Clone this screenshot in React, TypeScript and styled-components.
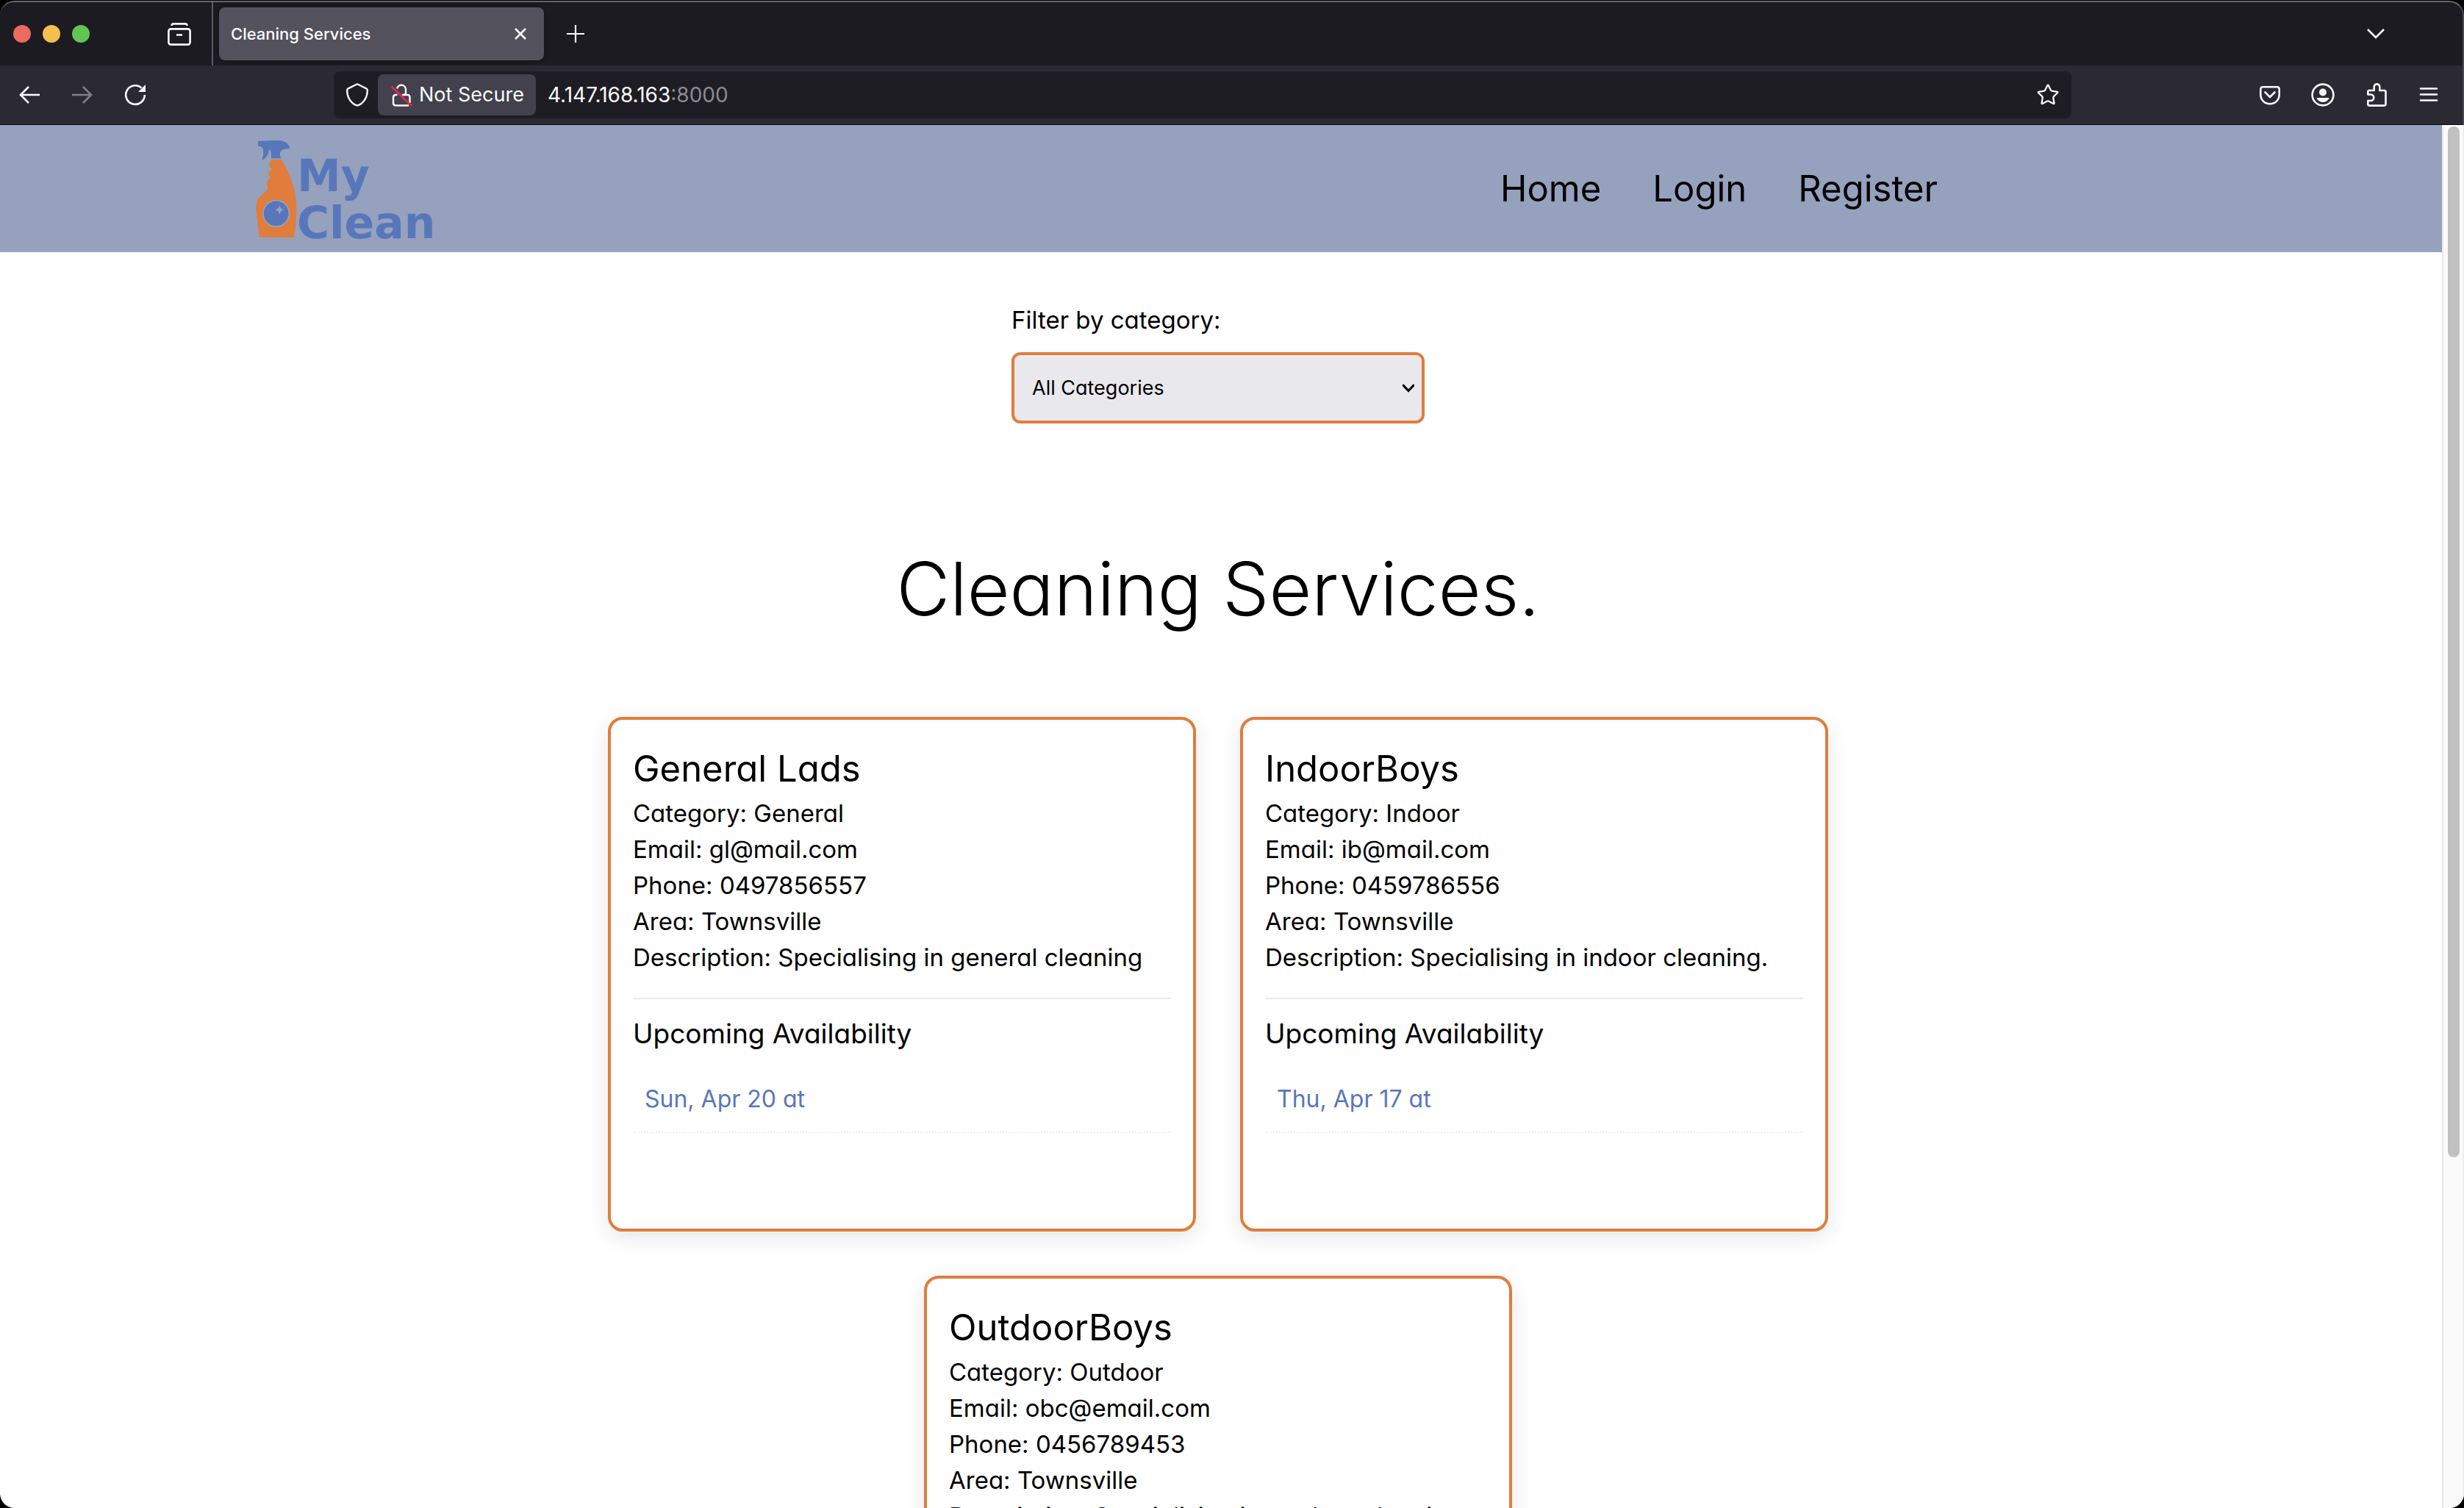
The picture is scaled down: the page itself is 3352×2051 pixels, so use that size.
import React from 'react';
import styled, { createGlobalStyle } from 'styled-components';
import { Star } from 'lucide-react';

const orange = '#e07d3c';
const blue = '#5877bb';
const haze = '#96a1bd';

const GlobalStyle = createGlobalStyle`
  *, *::before, *::after { box-sizing: border-box; }
  body { margin: 0; background: #000; }
  h1, h2, h3, p, ul { margin: 0; padding: 0; font-weight: inherit; }
  ul { list-style: none; }
  button { margin: 0; padding: 0; border: 0; background: none; color: inherit; font: inherit; }
  a { color: inherit; text-decoration: none; }
`;

const Window = styled.div`
  display: flex;
  flex-direction: column;
  height: 100vh;
  padding-top: 1px;
  overflow: hidden;
  background: #000;
  font-family: Inter, 'Liberation Sans', sans-serif;
`;

/* Browser chrome */
const TabStrip = styled.div`
  display: flex;
  align-items: center;
  flex: none;
  height: 88px;
  border-top: 2px solid #66656b;
  border-right: 2px solid #4a4951;
  border-radius: 20px 20px 0 0;
  background: #1c1b21;
  color: #fbfbfe;
`;

const Lights = styled.div`
  display: flex;
  gap: 16px;
  padding: 0 106px 0 18px;
`;

const Light = styled.button<{ $color: string }>`
  width: 24px;
  height: 24px;
  border-radius: 50%;
  background: ${(p) => p.$color};
`;

const IconButton = styled.button<{ $dim?: boolean }>`
  display: flex;
  flex: none;
  align-items: center;
  justify-content: center;
  width: 32px;
  height: 32px;
  color: ${(p) => (p.$dim ? '#807f85' : '#fbfbfe')};
`;

const Divider = styled.div`
  width: 2px;
  height: 100%;
  margin: 0 8px 0 28px;
  background: #5b5a62;
`;

const Tab = styled.div`
  display: flex;
  align-items: center;
  justify-content: space-between;
  width: 442px;
  height: 72px;
  margin-right: 27px;
  padding: 0 16px;
  border-radius: 8px;
  background: #54525c;
  box-shadow: 0 0 8px rgba(0, 0, 0, 0.4);
  font-size: 22px;
  font-weight: 500;
  line-height: 32px;
`;

const ListTabs = styled.div`
  margin-left: auto;
  padding-right: 102px;
`;

const Toolbar = styled.div`
  display: flex;
  align-items: center;
  flex: none;
  height: 81px;
  padding: 0 30px 0 24px;
  border-right: 2px solid #4a4951;
  border-bottom: 1px solid #0c0c0d;
  background: #2b2a33;
`;

const ToolGroup = styled.div`
  display: flex;
  gap: 40px;
`;

const AddressBar = styled.div`
  display: flex;
  align-items: center;
  flex: 1;
  height: 64px;
  margin: 0 254px;
  padding: 0 16px;
  border-radius: 8px;
  background: #1e1d23;
  color: #fbfbfe;
  font-size: 28px;
  line-height: 40px;
`;

const Security = styled.button`
  display: flex;
  align-items: center;
  gap: 8px;
  height: 56px;
  margin: 0 16px 0 12px;
  padding: 0 16px;
  border-radius: 8px;
  background: #42414d;
  font-size: 27px;
`;

const Url = styled.div`
  flex: 1;
`;

const Port = styled.span`
  color: #8c8b91;
`;

/* Web page */
const Viewport = styled.div`
  display: flex;
  flex: 1;
  min-height: 0;
  overflow: hidden;
  border-radius: 0 0 20px 20px;
  background: #fff;
`;

const Page = styled.div`
  flex: 1;
  min-width: 0;
  overflow: hidden;
  color: #000;
  font-weight: 400;
  font-feature-settings: 'cv11';
  font-optical-sizing: none;
`;

const ScrollTrack = styled.div`
  width: 30px;
  padding: 2px 6px;
  border-left: 2px solid #e8e8e8;
  border-right: 2px solid #efefef;
  background: #fafafa;
`;

const ScrollThumb = styled.div`
  width: 16px;
  height: 1402px;
  max-height: 75%;
  border-radius: 8px;
  background: #c1c1c1;
`;

const Header = styled.header`
  display: flex;
  align-items: center;
  justify-content: space-between;
  height: 173px;
  padding: 0 686px 0 348px;
  background: ${haze};
`;

const Logo = styled.a`
  display: flex;
  align-items: center;
`;

const LogoText = styled.span`
  display: flex;
  flex-direction: column;
  padding-top: 28px;
  color: ${blue};
  font-family: 'DejaVu Sans', sans-serif;
  font-size: 60px;
  font-weight: 700;
  line-height: 64px;
`;

const Nav = styled.nav`
  display: flex;
  gap: 70px;
  font-size: 49px;
  line-height: 72px;
`;

const Main = styled.main`
  display: flex;
  flex-direction: column;
  align-items: center;
  padding: 68px 8px 60px 0;
`;

const Filter = styled.form`
  display: flex;
  flex-direction: column;
  gap: 20px;
  width: 562px;
  font-size: 33px;
  line-height: 48px;
`;

const SelectWrap = styled.div`
  display: grid;
  align-items: center;
  color: #000;

  > * { grid-area: 1 / 1; }
  > svg { justify-self: end; margin-right: 14px; pointer-events: none; }
`;

const Select = styled.select`
  appearance: none;
  width: 100%;
  height: 97px;
  padding: 0 24px;
  border: 4px solid ${orange};
  border-radius: 12px;
  background: #e9e8ed;
  color: inherit;
  font: 400 27px/40px Inter, 'Liberation Sans', sans-serif;
  font-feature-settings: inherit;
`;

const Title = styled.h1`
  margin: 153px 0 102px;
  font-size: 100px;
  font-weight: 300;
  line-height: 144px;
`;

const Cards = styled.section`
  display: flex;
  flex-wrap: wrap;
  justify-content: center;
  gap: 60px;
  width: 100%;
  max-width: 2400px;
`;

const Card = styled.article`
  width: 800px;
  min-height: 700px;
  padding: 30px;
  border: 4px solid ${orange};
  border-radius: 20px;
  background: #fff;
  box-shadow: 0 8px 30px rgba(0, 0, 0, 0.1);
  font-size: 33px;
  line-height: 49px;
`;

const CardName = styled.h2`
  font-size: 49px;
  line-height: 73px;
`;

const Availability = styled.section`
  margin-top: 30px;
  padding-top: 20px;
  border-top: 2px solid #e8e8e8;
`;

const AvailabilityTitle = styled.h3`
  margin-bottom: 18px;
  font-size: 37px;
  line-height: 54px;
`;

const Slot = styled.li`
  padding: 20px 16px;
  border-bottom: 2px dotted #eee;
  color: ${blue};
  font-size: 32px;
  line-height: 48px;
`;

const Icon = ({ size = 32, width = 2.6, children }: { size?: number; width?: number; children: React.ReactNode }) => (
  <svg width={size} height={size} viewBox="0 0 32 32" fill="none" stroke="currentColor" strokeWidth={width} aria-hidden="true">
    {children}
  </svg>
);

const Bottle = () => (
  <svg width="56" height="132" viewBox="0 0 168 396" aria-hidden="true">
    <path
      fill={blue}
      d="M9 3C40 1 70 0 96 0C118 2 134 14 138 26V33L118 35C104 38 98 46 99 57C99 64 101 69 104 73H62C64 60 63 46 57 35C52 40 52 50 49 57C44 68 36 76 25 81C31 64 32 46 29 34C28 26 22 24 9 24Z"
    />
    <path
      fill={orange}
      d="M66 78H105C140 134 166 205 166 276C166 326 161 374 155 396H14L1 285C-1 246 6 238 32 216C46 204 50 202 47 188C45 180 43 168 50 160C54 156 60 156 60 150C52 142 48 134 54 126C58 121 66 122 66 117C60 114 53 106 54 98C56 89 60 84 66 78Z"
    />
    <circle cx="83" cy="298" r="53" fill={blue} stroke={haze} strokeWidth="5" />
    <path fill={haze} d="M97 263Q99 281 117 283Q99 285 97 303Q95 285 77 283Q95 281 97 263Z" />
  </svg>
);

interface Service {
  name: string;
  category: string;
  email: string;
  phone: string;
  area: string;
  description: string;
  slot: string;
}

const services: Service[] = [
  { name: 'General Lads', category: 'General', email: 'gl@mail.com', phone: '0497856557', area: 'Townsville', description: 'Specialising in general cleaning', slot: 'Sun, Apr 20 at' },
  { name: 'IndoorBoys', category: 'Indoor', email: 'ib@mail.com', phone: '0459786556', area: 'Townsville', description: 'Specialising in indoor cleaning.', slot: 'Thu, Apr 17 at' },
  { name: 'OutdoorBoys', category: 'Outdoor', email: 'obc@email.com', phone: '0456789453', area: 'Townsville', description: 'Specialising in outdoor cleaning', slot: '' },
];

const ServiceCard = ({ service }: { service: Service }) => (
  <Card>
    <CardName>{service.name}</CardName>
    <p>Category: {service.category}</p>
    <p>Email: {service.email}</p>
    <p>Phone: {service.phone}</p>
    <p>Area: {service.area}</p>
    <p>Description: {service.description}</p>
    {service.slot && (
      <Availability>
        <AvailabilityTitle>Upcoming Availability</AvailabilityTitle>
        <ul>
          <Slot>{service.slot}</Slot>
        </ul>
      </Availability>
    )}
  </Card>
);

export default function App() {
  return (
    <Window>
      <GlobalStyle />
      <TabStrip>
        <Lights>
          <Light $color="#ed6a5e" aria-label="Close window" />
          <Light $color="#f5bf4f" aria-label="Minimise window" />
          <Light $color="#61c554" aria-label="Zoom window" />
        </Lights>
        <IconButton aria-label="Recent browsing">
          <Icon>
            <rect x="1.4" y="9.4" width="29.2" height="21.2" rx="3" />
            <path d="M5.5 5Q5.5 2.4 8 2.4H24Q26.5 2.4 26.5 5M12 17.5H20" />
          </Icon>
        </IconButton>
        <Divider />
        <Tab>
          <span>Cleaning Services</span>
          <IconButton aria-label="Close tab">
            <Icon>
              <path d="M9 9L23 23M23 9L9 23" />
            </Icon>
          </IconButton>
        </Tab>
        <IconButton aria-label="New tab">
          <Icon width={2.2}>
            <path d="M16 4V28M4 16H28" />
          </Icon>
        </IconButton>
        <ListTabs>
          <IconButton aria-label="List all tabs">
            <Icon>
              <path d="M5 10L16 21L27 10" />
            </Icon>
          </IconButton>
        </ListTabs>
      </TabStrip>

      <Toolbar>
        <ToolGroup>
          <IconButton aria-label="Back">
            <Icon>
              <path d="M3 16H30M15 5L4 16L15 27" />
            </Icon>
          </IconButton>
          <IconButton $dim aria-label="Forward">
            <Icon>
              <path d="M2 16H29M17 5L28 16L17 27" />
            </Icon>
          </IconButton>
          <IconButton aria-label="Reload">
            <Icon>
              <path d="M28.8 16A12.8 12.8 0 1 1 24.5 6.5" />
              <path d="M30 2V12H20Z" fill="currentColor" stroke="none" />
            </Icon>
          </IconButton>
        </ToolGroup>
        <AddressBar>
          <IconButton aria-label="Tracking protection">
            <Icon width={2.4}>
              <path strokeLinejoin="round" d="M16 1.4Q17 1.6 18 2.3L28.6 7.6Q29.8 8.3 29.8 10C29.8 19 25 28 16 30.6C7 28 2.2 19 2.2 10Q2.2 8.3 3.4 7.6L14 2.3Q15 1.6 16 1.4Z" />
            </Icon>
          </IconButton>
          <Security>
            <Icon width={2.4}>
              <path d="M10.2 7.5A6 6 0 0 1 22 8V13Q22 16 19 16M10.5 16H8.5Q5 16 5 19.5V27Q5 30.5 8.5 30.5H26M27.5 27V19.5Q27.5 16 24 16H17" />
              <path d="M3 5L30 31" stroke="#e22850" strokeWidth="3" />
            </Icon>
            Not Secure
          </Security>
          <Url>
            4.147.168.163<Port>:8000</Port>
          </Url>
          <IconButton aria-label="Bookmark this page">
            <Star size={36} strokeWidth={1.7} />
          </IconButton>
        </AddressBar>
        <ToolGroup>
          <IconButton aria-label="Save to Pocket">
            <Icon>
              <path d="M3.3 8.3Q3.3 5.3 6.3 5.3H25.7Q28.7 5.3 28.7 8.3V15.5C28.7 23 23.5 28.2 16 28.2S3.3 23 3.3 15.5Z" />
              <path strokeLinecap="round" strokeLinejoin="round" d="M9.5 12.5L16 19L22.5 12.5" />
            </Icon>
          </IconButton>
          <IconButton aria-label="Account">
            <Icon>
              <circle cx="16" cy="16" r="14.4" />
              <circle cx="16" cy="12.5" r="5" fill="currentColor" stroke="none" />
              <path d="M8.5 20H23.5Q25 20 24 21.7C22 24.5 19 26 16 26S10 24.5 8 21.7Q7 20 8.5 20Z" fill="currentColor" stroke="none" />
            </Icon>
          </IconButton>
          <IconButton aria-label="Extensions">
            <Icon>
              <path strokeLinejoin="round" d="M5.3 15.5V12Q5.3 10 7.3 10H13.7V5.2A3.8 3.8 0 0 1 21.3 5.2V10H27.5Q29.5 10 29.5 12V28.6Q29.5 30.6 27.5 30.6H7.3Q5.3 30.6 5.3 28.6V24H9A4.2 4.2 0 0 0 9 15.5Z" />
            </Icon>
          </IconButton>
          <IconButton aria-label="Menu">
            <Icon>
              <path strokeLinecap="round" d="M5 7.5H27M5 15.5H27M5 23.5H27" />
            </Icon>
          </IconButton>
        </ToolGroup>
      </Toolbar>

      <Viewport>
        <Page>
          <Header>
            <Logo href="#" aria-label="My Clean">
              <Bottle />
              <LogoText>
                <span>My</span>
                <span>Clean</span>
              </LogoText>
            </Logo>
            <Nav>
              <a href="#home">Home</a>
              <a href="#login">Login</a>
              <a href="#register">Register</a>
            </Nav>
          </Header>
          <Main>
            <Filter>
              <label htmlFor="category">Filter by category:</label>
              <SelectWrap>
                <Select id="category" defaultValue="all">
                  <option value="all">All Categories</option>
                  <option value="general">General</option>
                  <option value="indoor">Indoor</option>
                  <option value="outdoor">Outdoor</option>
                </Select>
                <Icon size={16} width={6}>
                  <path d="M2 8L16 23L30 8" strokeLinecap="round" />
                </Icon>
              </SelectWrap>
            </Filter>
            <Title>Cleaning Services.</Title>
            <Cards>
              {services.map((service) => (
                <ServiceCard key={service.name} service={service} />
              ))}
            </Cards>
          </Main>
        </Page>
        <ScrollTrack>
          <ScrollThumb />
        </ScrollTrack>
      </Viewport>
    </Window>
  );
}
